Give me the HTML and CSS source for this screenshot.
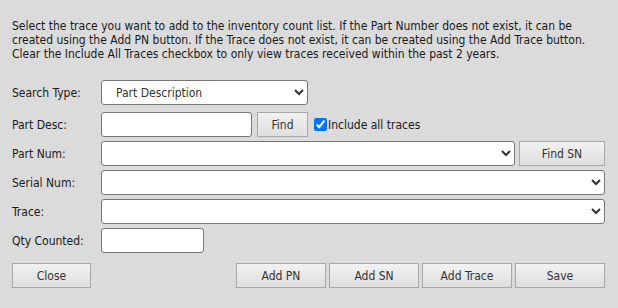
FILE: index.html
```html
<!DOCTYPE html>
<html lang="en">
  <head>
    <meta charset="UTF-8" />
    <title>Add Inventory Count</title>
    <link rel="stylesheet" href="styles.css">
  </head>
  <body>
    <div id="dialog">
      <p class="intro">
        Select the trace you want to add to the inventory count list. If the Part Number does not exist, it can be
        created using the Add PN button. If the Trace does not exist, it can be created using the Add Trace button.
        Clear the Include All Traces checkbox to only view traces received within the past 2 years.
      </p>

      <div class="form">
        <div class="row first">
          <label class="lbl">Search Type:</label>
          <select class="search-type">
            <option>Part Description</option>
            <option>Part Number</option>
          </select>
        </div>
        <div class="row">
          <label class="lbl">Part Desc:</label>
          <input type="text" class="desc" />
          <button class="btn find">Find</button>
          <label class="chk"><input type="checkbox" checked />Include all traces</label>
        </div>
        <div class="row">
          <label class="lbl">Part Num:</label>
          <select class="partnum"><option></option></select>
          <button class="btn findsn">Find SN</button>
        </div>
        <div class="row">
          <label class="lbl">Serial Num:</label>
          <select class="wide"><option></option></select>
        </div>
        <div class="row">
          <label class="lbl">Trace:</label>
          <select class="wide"><option></option></select>
        </div>
        <div class="row">
          <label class="lbl">Qty Counted:</label>
          <input type="text" class="qty" />
        </div>
      </div>

      <div class="actions">
        <button class="btn close">Close</button>
        <div class="right">
          <button class="btn act">Add PN</button>
          <button class="btn act">Add SN</button>
          <button class="btn act">Add Trace</button>
          <button class="btn act">Save</button>
        </div>
      </div>
    </div>
  </body>
</html>
```

FILE: styles.css
```css
* {
  padding: 0px;
  margin: 0px;
  box-sizing: border-box;
}
body {
  background: #dbdbdb;
  font-family: Tahoma, "DejaVu Sans Condensed", "DejaVu Sans", sans-serif;
  font-size: 12px;
  color: #1a1a1a;
}
#dialog {
  width: 618px;
  height: 308px;
  padding: 19px 13px 0px 12px;
}
.intro {
  line-height: 14px;
  margin-bottom: 19px;
}
.form {
  display: flex;
  flex-direction: column;
  gap: 4px;
}
.row {
  display: flex;
  align-items: center;
  height: 25px;
}
.row.first {
  margin-bottom: 3px;
}
.lbl {
  width: 89px;
  flex: none;
}
select,
input[type="text"] {
  height: 25px;
  border: 1px solid #767676;
  border-radius: 3px;
  background: #fff;
  font-family: inherit;
  font-size: 12px;
  color: #333;
}
.search-type {
  width: 207px;
  padding-left: 10px;
}
.desc {
  width: 151px;
}
.qty {
  width: 103px;
}
.partnum {
  width: 414px;
}
.wide {
  flex: 1;
}
.btn {
  height: 25px;
  border: 1px solid #a8a8a8;
  background: linear-gradient(#f2f2f2, #dedede);
  font-family: inherit;
  font-size: 12px;
  color: #333;
}
.find {
  width: 51px;
  margin-left: 5px;
}
.findsn {
  width: 86px;
  margin-left: 4px;
}
.chk {
  display: flex;
  align-items: center;
  margin-left: 6px;
}
.chk input {
  margin: 0px 1px 0px 0px;
  width: 13px;
  height: 13px;
}
.actions {
  display: flex;
  justify-content: space-between;
  margin-top: 10px;
}
.close {
  width: 79px;
}
.right {
  display: flex;
  gap: 3px;
}
.act {
  width: 90px;
}
```
